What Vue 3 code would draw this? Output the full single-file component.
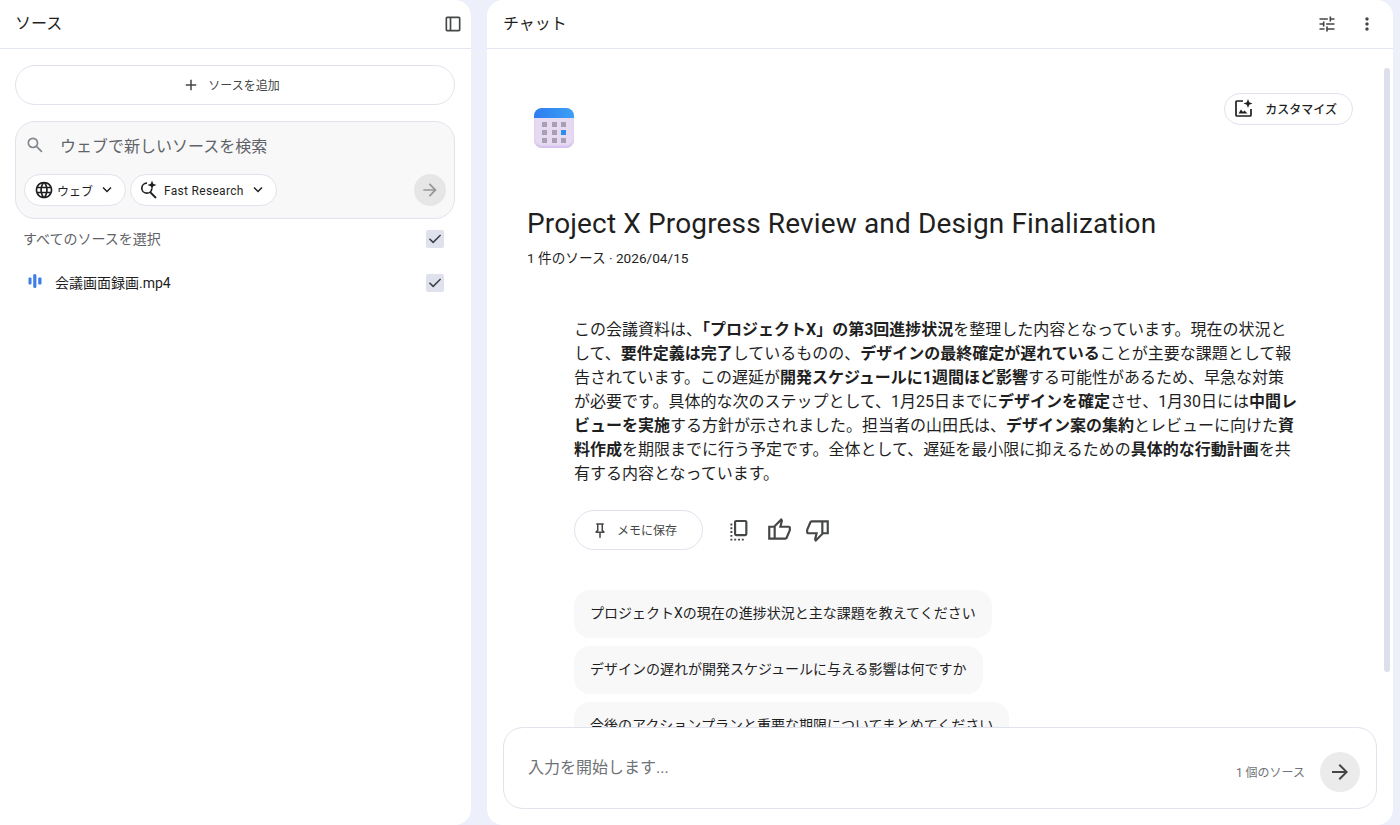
<template>
  <div class="page">
    <section class="panel sources">
      <header class="panel-head">
        <span class="panel-title">ソース</span>
        <svg class="ico ico-panel" viewBox="0 -960 960 960"><path :d="icons.panel" /></svg>
      </header>
      <div class="sources-body">
        <button class="add-btn">
          <svg class="ico ico-add" viewBox="0 -960 960 960"><path :d="icons.add" /></svg>
          <span>ソースを追加</span>
        </button>
        <div class="search-box">
          <div class="search-row">
            <svg class="ico ico-search" viewBox="0 -960 960 960"><path :d="icons.search" /></svg>
            <span class="search-text">ウェブで新しいソースを検索</span>
          </div>
          <div class="search-tools">
            <button class="chip">
              <svg class="ico ico-globe" viewBox="0 -960 960 960"><path :d="icons.globe" /></svg>
              <span>ウェブ</span>
              <svg class="ico ico-chev" viewBox="0 -960 960 960"><path :d="icons.chevron" /></svg>
            </button>
            <button class="chip">
              <svg class="ico ico-spark" viewBox="0 0 20 20">
                <path d="M9 3.200a5 5 0 1 0 4.800 5.300" fill="none" stroke="currentColor" stroke-width="1.700" />
                <path d="M12 12l6 6" fill="none" stroke="currentColor" stroke-width="1.800" />
                <path d="M14 0.500l1.200 3.300 3.300 1.200-3.300 1.200L14 9.500l-1.200-3.300L9.500 5l3.300-1.200z" />
              </svg>
              <span class="chip-latin">Fast Research</span>
              <svg class="ico ico-chev" viewBox="0 -960 960 960"><path :d="icons.chevron" /></svg>
            </button>
            <span class="go-btn">
              <svg class="ico" viewBox="0 -960 960 960"><path :d="icons.arrow" /></svg>
            </span>
          </div>
        </div>
        <div class="select-row">
          <span class="select-label">すべてのソースを選択</span>
          <span class="check">
            <svg viewBox="0 -960 960 960"><path :d="icons.check" /></svg>
          </span>
        </div>
        <div class="source-row">
          <svg class="audio" viewBox="0 0 14 14">
            <rect x="0.500" y="3.500" width="3" height="7" rx="1" />
            <rect x="5.200" y="0" width="3.200" height="14" rx="1.500" />
            <rect x="10.200" y="3.500" width="3.300" height="7" rx="1" />
          </svg>
          <span class="source-name">会議画面録画.mp4</span>
          <span class="check">
            <svg viewBox="0 -960 960 960"><path :d="icons.check" /></svg>
          </span>
        </div>
      </div>
    </section>

    <section class="panel chat">
      <header class="panel-head chat-head">
        <span class="panel-title">チャット</span>
        <div class="head-actions">
          <svg class="ico ico-head" viewBox="0 -960 960 960"><path :d="icons.tune" /></svg>
          <svg class="ico ico-head" viewBox="0 -960 960 960"><path :d="icons.more" /></svg>
        </div>
      </header>

      <div class="chat-scroll">
        <div class="scrollbar"></div>
        <div class="note-top">
          <div class="emoji">
            <div class="emoji-top"></div>
            <div class="emoji-grid">
              <i v-for="n in 9" :key="n" :class="{ on: n === 6 }"></i>
            </div>
          </div>
          <button class="custom-btn">
            <svg class="ico ico-custom" viewBox="0 0 20 20">
              <path d="M9 2H3a1 1 0 0 0-1 1v13a1 1 0 0 0 1 1h13a1 1 0 0 0 1-1V10" fill="none" stroke="currentColor" stroke-width="1.700" />
              <path d="M4.500 14.500l2.500-4 2 2.500 1.500-1.500 3 3z" />
              <path d="M14 0l1.200 3.300 3.300 1.200-3.300 1.200L14 9l-1.200-3.300L9.500 4.500l3.300-1.200z" />
            </svg>
            <span>カスタマイズ</span>
          </button>
        </div>

        <h1 class="note-title">Project X Progress Review and Design Finalization</h1>
        <p class="note-meta">1 件のソース · 2026/04/15</p>

        <div class="summary-wrap">
          <p class="summary">
            この会議資料は、<b>「プロジェクトX」の第3回進捗状況</b>を整理した内容となっています。現在の状況として、<b>要件定義は完了</b>しているものの、<b>デザインの最終確定が遅れている</b>ことが主要な課題として報告されています。この遅延が<b>開発スケジュールに1週間ほど影響</b>する可能性があるため、早急な対策が必要です。具体的な次のステップとして、1月25日までに<b>デザインを確定</b>させ、1月30日には<b>中間レビューを実施</b>する方針が示されました。担当者の山田氏は、<b>デザイン案の集約</b>とレビューに向けた<b>資料作成</b>を期限までに行う予定です。全体として、遅延を最小限に抑えるための<b>具体的な行動計画</b>を共有する内容となっています。
          </p>

          <div class="actions">
            <button class="save-btn">
              <svg class="ico ico-pin" viewBox="0 -960 960 960"><path :d="icons.pin" /></svg>
              <span>メモに保存</span>
            </button>
            <svg class="ico ico-act ico-copy" viewBox="0 0 24 24">
              <rect x="9.300" y="3.700" width="10.400" height="13" rx="1" fill="none" stroke="currentColor" stroke-width="2" />
              <path d="M5 6h1.800v1.800H5zM5 9.500h1.800v1.800H5zM5 13h1.800v1.800H5zM5 16.500h1.800v1.800H5zM5 20h1.800v1.800H5zM8.500 20h1.800v1.800H8.500zM12 20h1.800v1.800H12zM15.500 20h1.800v1.800h-1.800z" />
            </svg>
            <svg class="ico ico-act" viewBox="0 -960 960 960"><path :d="icons.up" /></svg>
            <svg class="ico ico-act" viewBox="0 -960 960 960"><path :d="icons.down" /></svg>
          </div>

          <div class="suggestions">
            <div v-for="s in suggestions" :key="s" class="suggestion">{{ s }}</div>
          </div>
        </div>
      </div>

      <div class="composer">
        <span class="composer-text">入力を開始します...</span>
        <span class="composer-count">1 個のソース</span>
        <span class="send-btn">
          <svg class="ico" viewBox="0 -960 960 960"><path :d="icons.arrow" /></svg>
        </span>
      </div>
    </section>
  </div>
</template>

<script setup>
const suggestions = [
  "プロジェクトXの現在の進捗状況と主な課題を教えてください",
  "デザインの遅れが開発スケジュールに与える影響は何ですか",
  "今後のアクションプランと重要な期限についてまとめてください",
];

const icons = {
  panel: "M200-120q-33 0-56.500-23.500T120-200v-560q0-33 23.500-56.500T200-840h560q33 0 56.500 23.500T840-760v560q0 33-23.500 56.500T760-120H200Zm120-80v-560H200v560h120Zm80 0h360v-560H400v560Z",
  add: "M440-440H200v-80h240v-240h80v240h240v80H520v240h-80v-240Z",
  search: "M784-120 532-372q-30 24-69 38t-83 14q-109 0-184.500-75.500T120-580q0-109 75.500-184.500T380-840q109 0 184.500 75.500T640-580q0 44-14 83t-38 69l252 252-56 56ZM380-400q75 0 127.500-52.500T560-580q0-75-52.500-127.500T380-760q-75 0-127.500 52.500T200-580q0 75 52.500 127.500T380-400Z",
  globe: "M480-80q-82 0-155-31.500t-127.500-86Q143-252 111.500-325T80-480q0-83 31.500-155.500t86-127Q252-817 325-848.500T480-880q83 0 155.500 31.500t127 86q54.500 54.500 86 127T880-480q0 82-31.500 155t-86 127.500q-54.500 54.500-127 86T480-80Zm0-82q26-36 45-75t31-83H404q12 44 31 83t45 75Zm-104-16q-18-33-31.500-68.500T322-320H204q29 50 72.500 87t99.500 55Zm208 0q56-18 99.500-55t72.500-87H638q-9 38-22.500 73.500T584-178ZM170-400h136q-3-20-4.500-39.500T300-480q0-21 1.500-40.500T306-560H170q-5 20-7.500 39.500T160-480q0 21 2.500 40.500T170-400Zm216 0h188q3-20 4.500-39.500T580-480q0-21-1.500-40.500T574-560H386q-3 20-4.500 39.500T380-480q0 21 1.500 40.500T386-400Zm268 0h136q5-20 7.500-39.500T800-480q0-21-2.500-40.500T790-560H654q3 20 4.500 39.500T660-480q0 21-1.500 40.500T654-400Zm-16-240h118q-29-50-72.500-87T584-782q18 33 31.500 68.500T638-640Zm-234 0h152q-12-44-31-83t-45-75q-26 36-45 75t-31 83Zm-200 0h118q9-38 22.500-73.500T376-782q-56 18-99.500 55T204-640Z",
  chevron: "M480-344 240-584l56-56 184 184 184-184 56 56-240 240Z",
  arrow: "M647-440H160v-80h487L423-744l57-56 320 320-320 320-57-56 224-224Z",
  check: "M382-240 154-468l57-57 171 171 367-367 57 57-424 424Z",
  tune: "M440-120v-240h80v80h320v80H520v80h-80Zm-320-80v-80h240v80H120Zm160-160v-80H120v-80h160v-80h80v240h-80Zm160-80v-80h400v80H440Zm160-160v-240h80v80h160v80H680v80h-80Zm-480-80v-80h400v80H120Z",
  more: "M480-160q-33 0-56.500-23.500T400-240q0-33 23.500-56.500T480-320q33 0 56.500 23.500T560-240q0 33-23.500 56.500T480-160Zm0-240q-33 0-56.500-23.500T400-480q0-33 23.500-56.500T480-560q33 0 56.500 23.500T560-480q0 33-23.500 56.500T480-400Zm0-240q-33 0-56.500-23.500T400-720q0-33 23.500-56.500T480-800q33 0 56.500 23.500T560-720q0 33-23.500 56.500T480-640Z",
  pin: "m640-480 80 80v80H520v240l-40 40-40-40v-240H240v-80l80-80v-280h-40v-80h400v80h-40v280Zm-286 80h252l-46-46v-314H400v314l-46 46Z",
  up: "M720-120H280v-520l280-280 50 50q7 7 11.500 19t4.500 23v14l-44 174h258q32 0 56 24t24 56v80q0 7-2 15t-4 15L794-168q-9 20-30 34t-44 14Zm-360-80h360l120-280v-80H480l54-220-174 174v406Zm-80-440v80H160v360h120v80H80v-520h200Z",
  down: "M240-840h440v520L400-40l-50-50q-7-7-11.500-19t-4.500-23v-14l44-174H120q-32 0-56-24t-24-56v-80q0-7 2-15t4-15l120-282q9-20 30-34t44-14Zm360 80H240L120-480v80h360l-54 220 174-174v-406Zm80 440v-80h120v-360H680v-80h200v520H680Z",
};
</script>

<style>
html,
body {
  margin: 0;
  background: #edeffa;
}
</style>

<style scoped>
.page {
  display: flex;
  gap: 16px;
  width: 1400px;
  height: 825px;
  padding-right: 7px;
  box-sizing: border-box;
  background: #edeffa;
  font-family: Roboto, "Noto Sans CJK JP", sans-serif;
  color: #1f1f1f;
  overflow: hidden;
}
button {
  font-family: inherit;
  background: #fff;
  cursor: pointer;
}
.ico {
  display: block;
  width: 24px;
  height: 24px;
  flex: none;
  fill: currentColor;
}
.panel {
  display: flex;
  flex-direction: column;
  background: #fff;
  border-radius: 16px;
  overflow: hidden;
}
.sources {
  width: 471px;
  flex: none;
  border-radius: 0 16px 16px 0;
}
.chat {
  flex: 1;
  min-width: 0;
}
.panel-head {
  display: flex;
  align-items: center;
  justify-content: space-between;
  height: 48px;
  flex: none;
  padding: 0 8px 0 15px;
  border-bottom: 1px solid #e2e5f2;
}
.panel-title {
  font-size: 16px;
  margin-bottom: 5px;
}
.ico-panel {
  width: 20px;
  height: 20px;
  color: #444746;
}
.sources-body {
  display: flex;
  flex-direction: column;
  padding: 16px 16px 0 15px;
}
.add-btn {
  display: flex;
  align-items: center;
  justify-content: center;
  gap: 8px;
  height: 40px;
  padding: 0 8px 0 0;
  border: 1px solid #e0e2ee;
  border-radius: 20px;
  font-size: 12px;
  color: #444746;
}
.add-btn span {
  margin-bottom: 2px;
}
.ico-add {
  width: 18px;
  height: 18px;
}
.search-box {
  margin-top: 16px;
  height: 98px;
  box-sizing: border-box;
  border: 1px solid #e0e2ee;
  border-radius: 20px;
  background: #f8f8f9;
  padding: 0 8px;
}
.search-row {
  display: flex;
  align-items: center;
  height: 46px;
  padding-left: 1px;
  color: #80868b;
}
.ico-search {
  width: 20px;
  height: 20px;
  margin-bottom: 1px;
}
.search-text {
  margin-left: 15px;
  font-size: 16px;
  color: #5f6368;
}
.search-tools {
  display: flex;
  align-items: center;
  gap: 4px;
  height: 32px;
  margin-top: 6px;
}
.chip {
  display: flex;
  align-items: center;
  height: 32px;
  padding: 0 9px 0 9px;
  border: 1px solid #e0e2ee;
  border-radius: 16px;
  font-size: 12px;
  color: #1f1f1f;
}
.chip-latin {
  letter-spacing: 0.3px;
  margin-top: 1px;
}
.ico-globe {
  width: 20px;
  height: 20px;
  margin-right: 3px;
}
.ico-spark {
  width: 20px;
  height: 20px;
  margin: 0 6px 0 -2px;
}
.ico-chev {
  width: 18px;
  height: 18px;
  margin-left: 5px;
}
.go-btn {
  display: flex;
  align-items: center;
  justify-content: center;
  width: 32px;
  height: 32px;
  margin-left: auto;
  border-radius: 50%;
  background: #e6e6e6;
  color: #969696;
}
.go-btn .ico {
  width: 20px;
  height: 20px;
}
.select-row,
.source-row {
  display: flex;
  align-items: center;
  padding: 0 11px 0 8px;
}
.select-row {
  height: 40px;
}
.select-label {
  font-size: 14px;
  color: #5f6368;
  margin-bottom: 2px;
}
.check {
  display: flex;
  align-items: center;
  justify-content: center;
  width: 18px;
  height: 18px;
  margin-left: auto;
  border-radius: 2px;
  background: #dfe1ec;
}
.check svg {
  width: 18px;
  height: 18px;
  fill: #3c4043;
}
.source-row {
  height: 48px;
  padding-left: 13px;
}
.audio {
  width: 14px;
  height: 14px;
  margin-bottom: 4px;
  fill: #3f7ee8;
}
.source-name {
  margin-left: 13px;
  font-size: 14px;
  margin-bottom: 2px;
}
.chat-head {
  padding: 0 16px 0 16px;
}
.head-actions {
  display: flex;
  align-items: center;
  gap: 20px;
  color: #444746;
}
.ico-head {
  width: 20px;
  height: 20px;
}
.chat-scroll {
  position: relative;
  flex: 1;
  min-height: 0;
  overflow: hidden;
  padding: 44px 0 0 40px;
}
.scrollbar {
  position: absolute;
  top: 19px;
  right: 3px;
  width: 6px;
  height: 604px;
  border-radius: 3px;
  background: #dde0ea;
}
.note-top {
  display: flex;
  justify-content: space-between;
  padding-right: 40px;
}
.emoji {
  width: 40px;
  height: 40px;
  margin: 15px 0 0 7px;
  border-radius: 8px;
  overflow: hidden;
  background: #e5daf0;
  box-shadow: inset 0 -2px 2px #d6c0f0;
}
.emoji-top {
  height: 10px;
  background: linear-gradient(90deg, #2f7cf0, #3aa0f5);
}
.emoji-grid {
  display: grid;
  grid-template-columns: repeat(3, 5px);
  gap: 3px 4.500px;
  justify-content: center;
  padding-top: 4px;
}
.emoji-grid i {
  height: 5px;
  background: #a79fb3;
}
.emoji-grid i.on {
  background: #2f8cf0;
}
.custom-btn {
  display: flex;
  align-items: center;
  height: 32px;
  padding: 0 15px 0 9px;
  border: 1px solid #e0e2ee;
  border-radius: 16px;
  font-size: 12px;
  font-weight: 500;
  color: #1f1f1f;
}
.custom-btn span {
  margin-bottom: 2px;
}
.ico-custom {
  width: 20px;
  height: 20px;
  margin-right: 11px;
}
.note-title {
  margin: 58px 0 0;
  font-size: 28px;
  line-height: 36px;
  font-weight: 400;
  letter-spacing: 0.14px;
}
.note-meta {
  margin: 6px 0 0;
  font-size: 13.650px;
  line-height: 20px;
}
.summary-wrap {
  width: 724px;
  margin: 0 0 0 47px;
}
.summary {
  margin: 50px 0 0;
  font-size: 16px;
  line-height: 24px;
  color: #1f1f1f;
}
.actions {
  display: flex;
  align-items: center;
  height: 40px;
  margin-top: 24px;
  color: #444746;
}
.save-btn {
  display: flex;
  align-items: center;
  height: 40px;
  width: 129px;
  padding: 0 0 0 16px;
  border: 1px solid #e0e2ee;
  border-radius: 20px;
  font-size: 12px;
  color: #444746;
  margin-right: 22px;
}
.save-btn span {
  margin-bottom: 1px;
}
.ico-pin {
  width: 18px;
  height: 18px;
  margin-right: 8px;
}
.ico-act {
  width: 26px;
  height: 26px;
  margin-right: 13px;
}
.ico-copy {
  margin-right: 15px;
}
.suggestions {
  display: flex;
  flex-direction: column;
  align-items: flex-start;
  gap: 8px;
  margin-top: 40px;
}
.suggestion {
  padding: 0 16px;
  height: 48px;
  line-height: 47px;
  border-radius: 16px;
  background: #f8f8f9;
  font-size: 14px;
  color: #1f1f1f;
}
.composer {
  display: flex;
  align-items: center;
  flex: none;
  height: 82px;
  box-sizing: border-box;
  margin: 0 16px 16px;
  padding: 0 16px 0 24px;
  border: 1px solid #e0e2ee;
  border-radius: 20px;
  background: #fff;
}
.composer-text {
  font-size: 16px;
  color: #6f7276;
  margin-bottom: 5px;
}
.composer-count {
  margin-left: auto;
  margin-top: 6px;
  font-size: 12px;
  color: #6f7276;
}
.send-btn {
  display: flex;
  align-items: center;
  justify-content: center;
  width: 40px;
  height: 40px;
  margin-left: 15px;
  margin-top: 8px;
  border-radius: 50%;
  background: #ebebeb;
  color: #444746;
}
</style>
